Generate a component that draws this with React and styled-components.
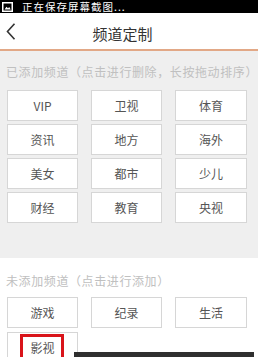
import React from "react";
import styled, { createGlobalStyle } from "styled-components";

const Global = createGlobalStyle`
  html, body { margin: 0; padding: 0; }
  body {
    width: 258px;
    height: 357px;
    overflow: hidden;
    background: #efefef;
    font-family: "Noto Sans CJK SC", "Noto Sans", sans-serif;
  }
`;

const Screen = styled.div`
  position: relative;
  width: 258px;
  height: 357px;
  overflow: hidden;
  background: #efefef;
`;

const StatusBar = styled.div`
  height: 13px;
  background: #000;
  display: flex;
  align-items: center;
  gap: 9px;
  padding-left: 2px;
`;

const StatusIcon = styled.svg`
  flex: none;
`;

const StatusText = styled.span`
  color: #fff;
  font-size: 10.5px;
  line-height: 13px;
  letter-spacing: 1px;
  white-space: nowrap;
`;

const Header = styled.div`
  height: 36px;
  background: #fff;
  border-bottom: 2px solid #e2a886;
  display: flex;
  align-items: center;
`;

const Back = styled.div`
  width: 30px;
  flex: none;
  display: flex;
  align-items: center;
  padding-left: 6px;
  box-sizing: border-box;
`;

const Title = styled.div`
  flex: 1;
  text-align: center;
  font-size: 15px;
  color: #333;
  padding-top: 4px;
  padding-right: 43px;
`;

const Section = styled.div`
  background: ${(p) => (p.$white ? "#fff" : "#efefef")};
  padding: ${(p) => p.$pad};
`;

const Label = styled.div`
  font-size: 12px;
  line-height: 14px;
  color: #c0c0c0;
  letter-spacing: 0.6px;
  white-space: nowrap;
  padding-left: 6px;
`;

const Grid = styled.div`
  display: grid;
  grid-template-columns: 71px 71px 72px;
  column-gap: 13px;
  row-gap: ${(p) => p.$rowGap}px;
  margin-top: ${(p) => p.$top}px;
  padding-left: 7px;
`;

const Chip = styled.div`
  position: relative;
  height: 31px;
  box-sizing: border-box;
  background: #fff;
  border: 1px solid #d6d6d6;
  display: flex;
  align-items: center;
  justify-content: center;
  font-size: 12px;
  color: #555;
`;

const Highlight = styled.div`
  position: absolute;
  left: 12px;
  top: 1px;
  width: 44px;
  height: 40px;
  box-sizing: border-box;
  border: 3px solid #d9141a;
`;

const Toast = styled.div`
  position: absolute;
  left: 74px;
  top: 352px;
  width: 180px;
  height: 20px;
  background: #2f2f2f;
`;

const added = ["VIP", "卫视", "体育", "资讯", "地方", "海外", "美女", "都市", "少儿", "财经", "教育", "央视"];
const notAdded = ["游戏", "纪录", "生活", "影视"];

export default function App() {
  return (
    <Screen>
      <Global />
      <StatusBar>
        <StatusIcon width="11" height="10" viewBox="0 0 11 10">
          <rect x="0.75" y="0.75" width="9.5" height="8.5" fill="none" stroke="#fff" strokeWidth="1.5" />
          <path d="M2.5 7.5 L4.5 4.8 L6 6.3 L7.2 5 L8.8 7.5 Z" fill="#fff" />
        </StatusIcon>
        <StatusText>正在保存屏幕截图...</StatusText>
      </StatusBar>
      <Header>
        <Back>
          <svg width="10" height="17" viewBox="0 0 10 17">
            <polyline points="8.5,0.8 1.5,8.5 8.5,16.2" fill="none" stroke="#333" strokeWidth="1.6" />
          </svg>
        </Back>
        <Title>频道定制</Title>
      </Header>
      <Section $pad="14px 0 35px 0">
        <Label>已添加频道（点击进行删除，长按拖动排序）</Label>
        <Grid $top={11} $rowGap={3}>
          {added.map((t) => (
            <Chip key={t}>{t}</Chip>
          ))}
        </Grid>
      </Section>
      <Section $white $pad="16px 0 20px 0">
        <Label>未添加频道（点击进行添加）</Label>
        <Grid $top={9} $rowGap={4}>
          {notAdded.map((t) => (
            <Chip key={t}>
              {t}
              {t === "影视" && <Highlight />}
            </Chip>
          ))}
        </Grid>
      </Section>
      <Toast />
    </Screen>
  );
}
